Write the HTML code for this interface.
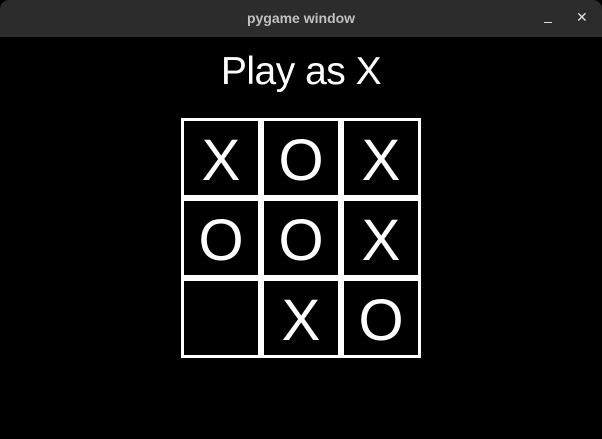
<!DOCTYPE html>
<html><head><style>
html,body{margin:0;padding:0;background:#000;width:602px;height:439px;overflow:hidden;font-family:"Liberation Sans","DejaVu Sans",sans-serif}
.bar{position:absolute;left:0;top:0;width:602px;height:37px;background:#2c2c2c;border-radius:9px 9px 0 0}
.bar .t{position:absolute;left:0;width:602px;top:10px;text-align:center;color:#c0c0c0;font-weight:bold;font-size:14px}
.bar .min{position:absolute;left:544px;top:22px;width:8px;height:1px;background:#ddd}
.bar .x{position:absolute;left:576px;top:9px;color:#ddd;font-size:14px}
.title{position:absolute;left:0;width:602px;top:50px;text-align:center;color:#fff;font-size:39px;letter-spacing:-0.5px}
.c{position:absolute;width:74px;height:74px;border:3px solid #fff;color:#fff;font-size:58px;text-align:center;line-height:80px}
</style></head><body>
<div class="bar"><div class="t">pygame window</div><div class="min"></div><div class="x">✕</div></div>
<div class="title">Play as X</div>
<div class="c" style="left:181px;top:118px">X</div>
<div class="c" style="left:261px;top:118px">O</div>
<div class="c" style="left:341px;top:118px">X</div>
<div class="c" style="left:181px;top:198px">O</div>
<div class="c" style="left:261px;top:198px">O</div>
<div class="c" style="left:341px;top:198px">X</div>
<div class="c" style="left:181px;top:278px"></div>
<div class="c" style="left:261px;top:278px">X</div>
<div class="c" style="left:341px;top:278px">O</div>
</body></html>
